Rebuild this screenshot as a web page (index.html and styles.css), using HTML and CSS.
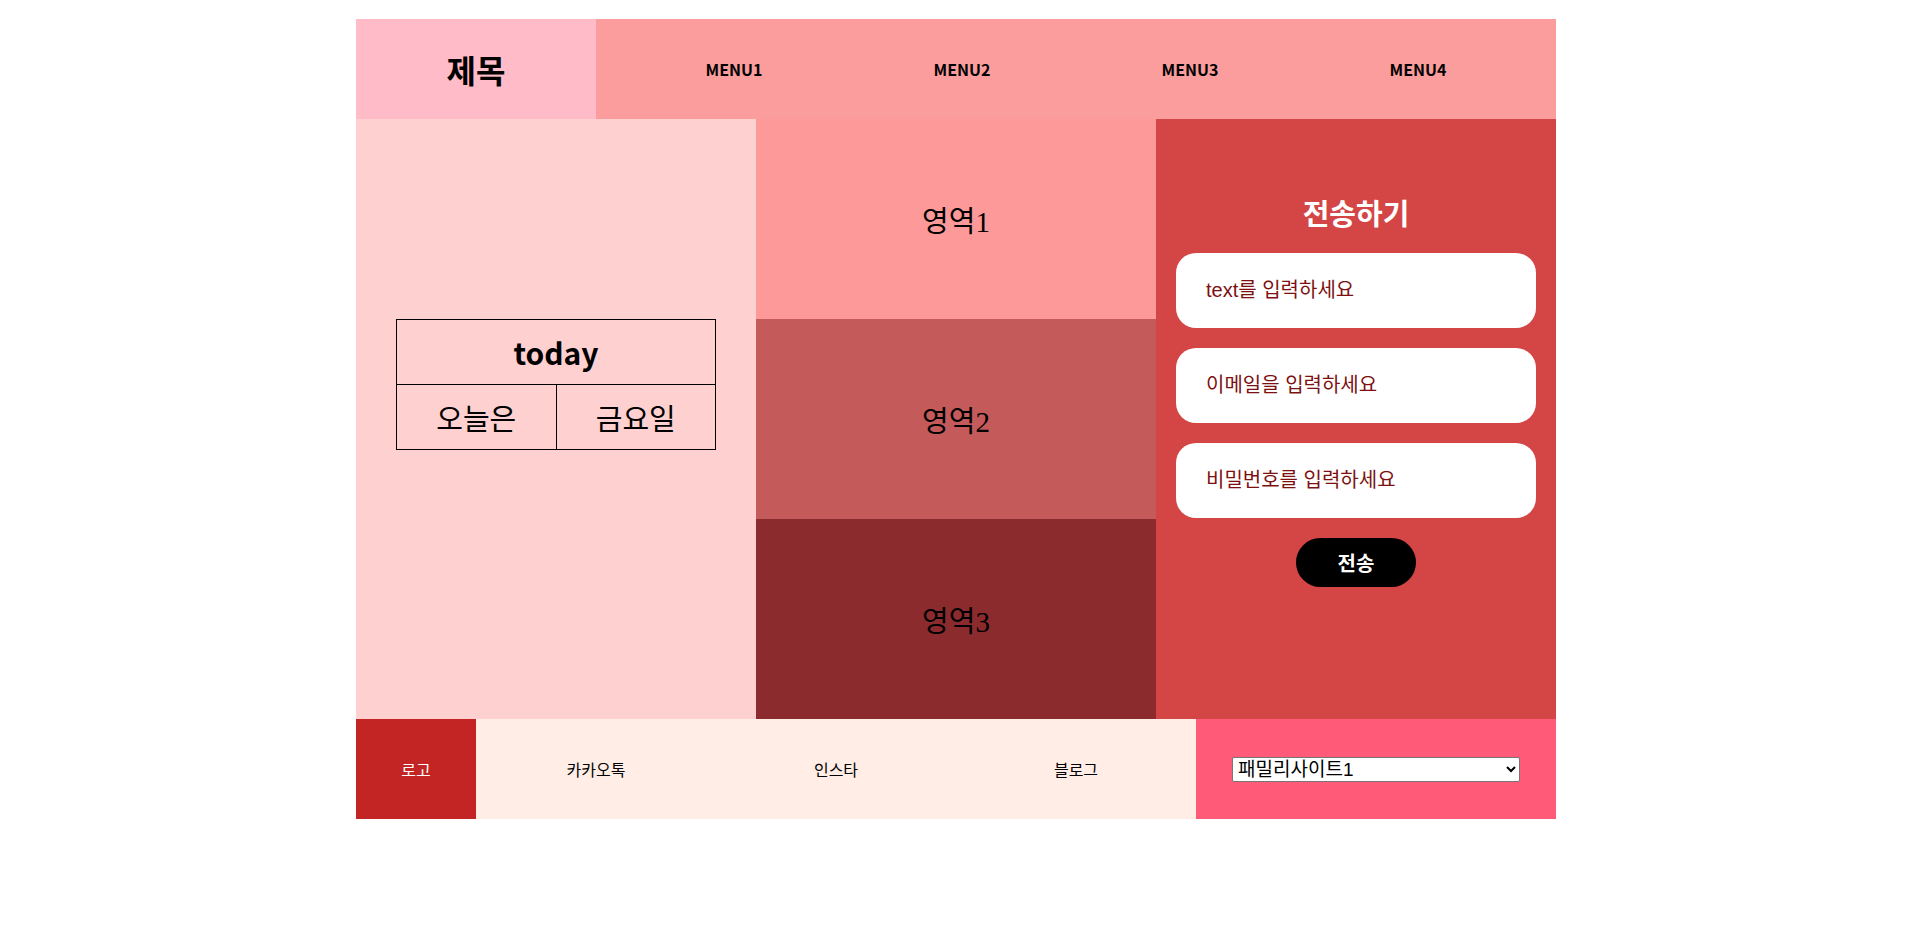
FILE: index.html
```html
<!DOCTYPE html>
<html lang="ko">
  <head>
    <meta charset="UTF-8" />
    <meta name="viewport" content="width=device-width, initial-scale=1.0" />
    <title>레이아웃</title>
    <link rel="stylesheet" href="styles.css">
  </head>
  <body>
    <div class="wrap">
      <header class="header">
        <div class="logo"><h1>제목</h1></div>
        <nav class="nav">
          <ul>
            <li>MENU1</li>
            <li>MENU2</li>
            <li>MENU3</li>
            <li>MENU4</li>
          </ul>
        </nav>
      </header>
      <section class="content">
        <div class="today-box">
          <table class="today">
            <tr><th colspan="2">today</th></tr>
            <tr><td>오늘은</td><td>금요일</td></tr>
          </table>
        </div>
        <div class="areas">
          <div class="area area1">영역1</div>
          <div class="area area2">영역2</div>
          <div class="area area3">영역3</div>
        </div>
        <form class="send">
          <h2>전송하기</h2>
          <input type="text" placeholder="text를 입력하세요" />
          <input type="email" placeholder="이메일을 입력하세요" />
          <input type="password" placeholder="비밀번호를 입력하세요" />
          <button type="button">전송</button>
        </form>
      </section>
      <footer class="footer">
        <div class="f-logo">로고</div>
        <ul class="f-links">
          <li>카카오톡</li>
          <li>인스타</li>
          <li>블로그</li>
        </ul>
        <div class="family">
          <select>
            <option>패밀리사이트1</option>
            <option>패밀리사이트2</option>
            <option>패밀리사이트3</option>
          </select>
        </div>
      </footer>
    </div>
  </body>
</html>
```

FILE: styles.css
```css
* {
  margin: 0;
  padding: 0;
  box-sizing: border-box;
}
body {
  font-family: "Noto Sans CJK KR", sans-serif;
  color: #000;
  background: #fff;
}
ul {
  list-style: none;
}
.wrap {
  width: 1200px;
  margin: 19px auto 0;
}

/* 헤더 */
.header {
  display: flex;
  height: 100px;
}
.logo {
  display: flex;
  justify-content: center;
  align-items: center;
  width: 240px;
  background: #ffbcc8;
}
.logo h1 {
  font-size: 32px;
  font-weight: 700;
}
.nav {
  flex: 1;
  background: #fc9d9d;
}
.nav ul {
  display: grid;
  grid-template-columns: repeat(4, 1fr);
  height: 100%;
  padding: 0 24px;
}
.nav li {
  display: flex;
  justify-content: center;
  align-items: center;
  font-size: 16px;
  font-weight: 700;
}

/* 본문 */
.content {
  display: flex;
  height: 600px;
}
.today-box {
  width: 400px;
  padding-top: 200px;
  background: #ffd0d0;
}
.today {
  width: 320px;
  margin: 0 auto;
  border-collapse: collapse;
}
.today th,
.today td {
  height: 65px;
  border: solid 1px #000;
  text-align: center;
  font-size: 29px;
  font-weight: 400;
}
.today th {
  font-size: 30px;
  font-weight: 700;
}
.areas {
  display: flex;
  flex-direction: column;
  width: 400px;
}
.area {
  display: flex;
  justify-content: center;
  align-items: center;
  height: 200px;
  font-family: "Liberation Serif", "Noto Sans CJK KR", serif;
  font-size: 29px;
}
.area1 {
  background: #fe9999;
}
.area2 {
  background: #c55a5a;
}
.area3 {
  background: #8c2b2e;
}
.send {
  display: flex;
  flex-direction: column;
  align-items: center;
  width: 400px;
  padding: 73px 20px 0;
  background: #d44545;
}
.send h2 {
  height: 40px;
  line-height: 40px;
  margin-bottom: 21px;
  color: #fff;
  font-size: 29px;
  font-weight: 700;
}
.send input {
  display: block;
  width: 360px;
  height: 75px;
  margin-bottom: 20px;
  padding: 0 30px;
  border: 0;
  border-radius: 20px;
  outline: 0;
  background: #fff;
  font-family: "Liberation Sans", "Noto Sans CJK KR", sans-serif;
  font-size: 20px;
  color: #7d1010;
}
.send input::placeholder {
  color: #7d1010;
}
.send button {
  width: 120px;
  height: 49px;
  border: 0;
  border-radius: 25px;
  background: #000;
  color: #fff;
  font-family: "Noto Sans CJK KR", sans-serif;
  font-size: 20px;
  font-weight: 700;
  cursor: pointer;
}

/* 푸터 */
.footer {
  display: flex;
  height: 100px;
}
.f-logo {
  display: flex;
  justify-content: center;
  align-items: center;
  width: 120px;
  background: #c32525;
  color: #fff;
  font-size: 16px;
}
.f-links {
  display: grid;
  grid-template-columns: repeat(3, 1fr);
  width: 720px;
  background: #ffede6;
}
.f-links li {
  display: flex;
  justify-content: center;
  align-items: center;
  font-size: 16px;
}
.family {
  display: flex;
  justify-content: center;
  align-items: center;
  width: 360px;
  background: #ff5a78;
}
.family select {
  width: 80%;
  height: 25px;
  padding: 0 1px;
  font-family: "Liberation Sans", "Noto Sans CJK KR", sans-serif;
  font-size: 19px;
  line-height: 21px;
  background: #fff;
  border: solid 1px #767676;
  border-radius: 2px;
}
```
